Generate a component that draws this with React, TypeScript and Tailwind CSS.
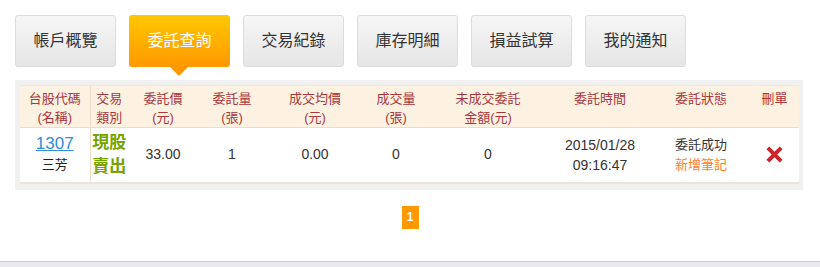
const tabs = ["帳戶概覽", "委託查詢", "交易紀錄", "庫存明細", "損益試算", "我的通知"];

const headers: { lines: string[]; w: string }[] = [
  { lines: ["台股代碼", "(名稱)"], w: "w-[70px]" },
  { lines: ["交易", "類別"], w: "w-[38px]" },
  { lines: ["委託價", "(元)"], w: "w-[70px]" },
  { lines: ["委託量", "(張)"], w: "w-[68px]" },
  { lines: ["成交均價", "(元)"], w: "w-[98px]" },
  { lines: ["成交量", "(張)"], w: "w-[64px]" },
  { lines: ["未成交委託", "金額(元)"], w: "w-[120px]" },
  { lines: ["委託時間"], w: "w-[104px]" },
  { lines: ["委託狀態"], w: "w-[98px]" },
  { lines: ["刪單"], w: "w-[49px]" },
];

export default function App() {
  return (
    <div className="w-[820px] h-[267px] bg-white flex flex-col font-['Liberation_Sans','Noto_Sans_CJK_TC',sans-serif]">
      <div className="flex gap-[13px] pl-[15px] pt-[15px]">
        {tabs.map((t, i) =>
          i === 1 ? (
            <div key={t} className="relative">
              <div className="w-[101px] h-[52px] rounded-[3px] bg-gradient-to-b from-[#ffc700] to-[#ff9800] text-white text-[16px] flex items-center justify-center">
                {t}
              </div>
              <div className="absolute left-[41px] top-[52px] w-0 h-0 border-l-[9px] border-r-[9px] border-t-[9px] border-l-transparent border-r-transparent border-t-[#ff9800]" />
            </div>
          ) : (
            <div
              key={t}
              className="w-[101px] h-[52px] rounded-[3px] border border-[#dcdcdc] bg-gradient-to-b from-[#f6f6f6] to-[#e6e6e6] text-[#333] text-[16px] flex items-center justify-center"
            >
              {t}
            </div>
          )
        )}
      </div>

      <div className="ml-[15px] mt-[13px] w-[788px] bg-[#f1f1f1] p-[5px] pb-[6px] pl-[5px] pr-[4px]">
        <table className="table-fixed border-collapse w-[779px] bg-white">
          <thead>
            <tr className="bg-[#fdf1e2] border-t border-[#f6e6d2] border-b border-b-[#efdcc6]">
              {headers.map((h, i) => (
                <th
                  key={i}
                  className={`${h.w} h-[42px] align-top pt-[3px] font-normal text-[13px] leading-[19px] text-[#a8373d] ${i === 0 ? "border-r border-[#ecdcc8]" : ""}`}
                >
                  {h.lines.map((l) => (
                    <div key={l}>{l}</div>
                  ))}
                </th>
              ))}
            </tr>
          </thead>
          <tbody>
            <tr className="h-[55px] border-b-2 border-[#ece4d8] text-[14px] text-[#333] text-center">
              <td className="border-r border-[#ecdcc8]">
                <div className="text-[17px] leading-[20px] text-[#2f8ed8] underline">1307</div>
                <div className="text-[13px] leading-[22px] text-[#222]">三芳</div>
              </td>
              <td className="text-[17px] leading-[24px] font-semibold text-[#76a300]">
                <div>現股</div>
                <div>賣出</div>
              </td>
              <td>33.00</td>
              <td>1</td>
              <td>0.00</td>
              <td>0</td>
              <td>0</td>
              <td className="leading-[20px]">
                <div>2015/01/28</div>
                <div>09:16:47</div>
              </td>
              <td className="text-[13px] leading-[20px]">
                <div>委託成功</div>
                <div className="text-[#ff7d2a]">新增筆記</div>
              </td>
              <td>
                <svg viewBox="0 0 20 20" className="w-[19px] h-[19px] mx-auto">
                  <path d="M3 3 L17 17 M17 3 L3 17" stroke="#c8262c" strokeWidth="4.2" />
                </svg>
              </td>
            </tr>
          </tbody>
        </table>
      </div>

      <div className="flex justify-center mt-[16px]">
        <div className="w-[17px] h-[23px] bg-[#ff9900] text-white text-[12px] font-bold flex items-center justify-center">
          1
        </div>
      </div>

      <div className="mt-auto h-[6px] border-t border-[#cccccc] bg-[#e9e9ef]" />
    </div>
  );
}
